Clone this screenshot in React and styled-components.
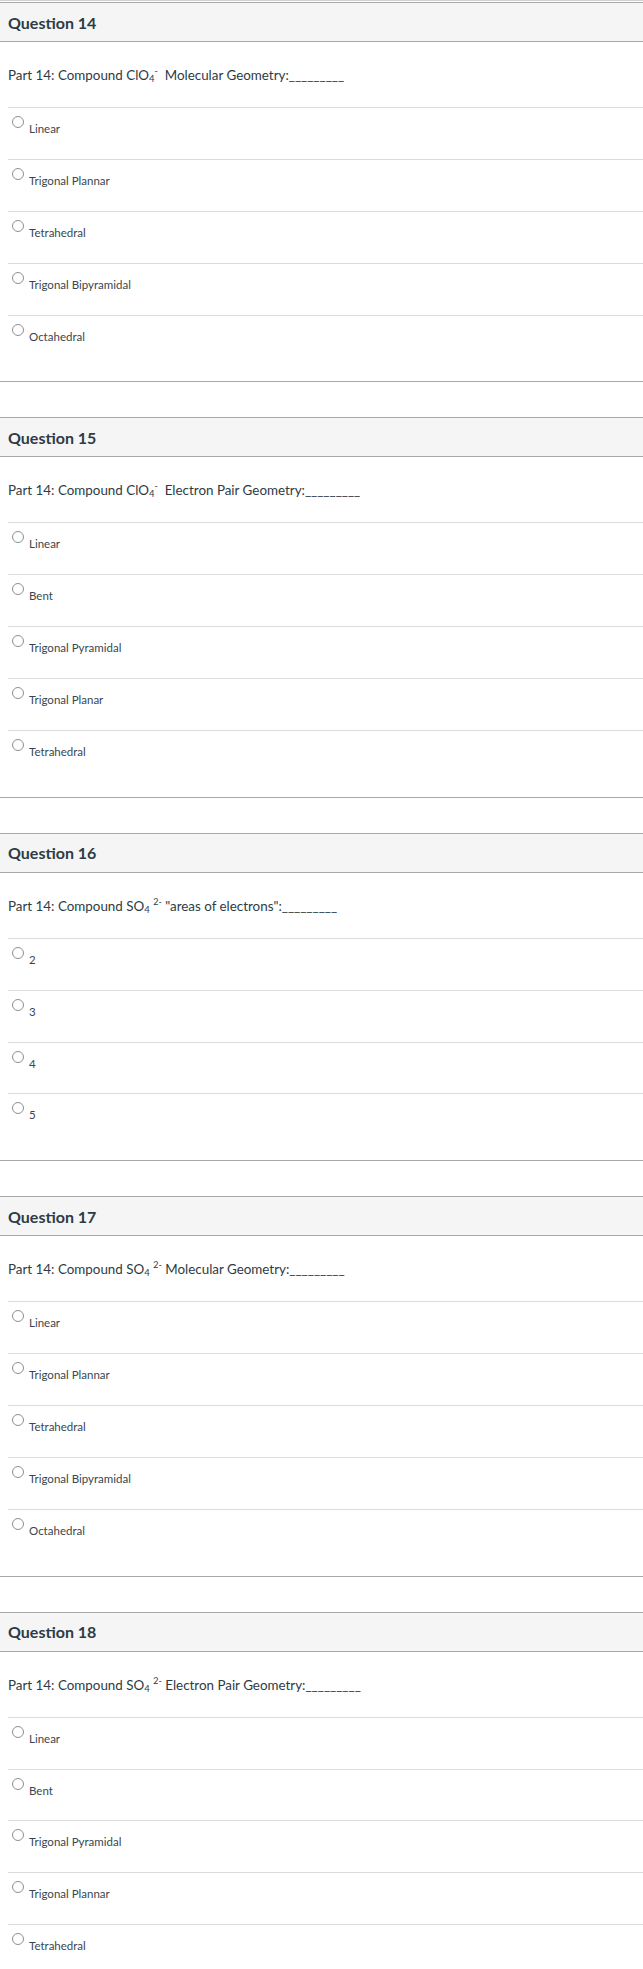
import React from 'react'
import styled, { createGlobalStyle } from 'styled-components'

const GlobalStyle = createGlobalStyle`
  body {
    margin: 0;
    background: #ffffff;
    font-family: Lato, "Liberation Sans", sans-serif;
    color: #2d3b45;
  }
`

const Page = styled.div`
  width: 643px;
`

const TopRule = styled.div`
  border-top: 1px solid #d0d0d0;
  margin-bottom: 1px;
`

const Block = styled.div`
  border-top: 1px solid #a9a9a9;
  border-bottom: 1px solid #a9a9a9;
  margin-bottom: 35px;
`

const Header = styled.div`
  height: 38px;
  background-color: #f5f5f5;
  border-bottom: 1px solid #a9a9a9;
  display: flex;
  align-items: center;
  padding-left: 8px;
  font-size: 16px;
  font-weight: 700;
  color: #2d3b45;
`

const Body = styled.div`
  padding: 23px 0 15px 8px;
`

const Prompt = styled.div`
  font-size: 13.4px;
  line-height: 20px;
  margin-bottom: 22px;
  color: #2d3b45;
  white-space: pre;
`

const Sub = styled.sub`
  font-size: 9.5px;
  line-height: 0;
  vertical-align: -2px;
`

const Sup = styled.sup`
  font-size: 9px;
  line-height: 0;
  vertical-align: 6px;
`

const Option = styled.div`
  border-top: 1px solid #dcdcdc;
  display: flex;
  align-items: flex-start;
  padding: 8px 0 0 4px;
  height: 42.875px;
`

const Radio = styled.span`
  width: 10px;
  height: 10px;
  border: 1px solid #8f8f8f;
  border-radius: 50%;
  background: #fff;
  flex-shrink: 0;
`

const Label = styled.span`
  margin: 6px 0 0 5px;
  font-size: 11.5px;
  line-height: 14px;
  color: #3a464f;
`

const questions = [
  {
    n: 14,
    prompt: (
      <>Part 14: Compound ClO<Sub>4</Sub><Sup>-</Sup>  Molecular Geometry:_________</>
    ),
    options: ['Linear', 'Trigonal Plannar', 'Tetrahedral', 'Trigonal Bipyramidal', 'Octahedral'],
  },
  {
    n: 15,
    prompt: (
      <>Part 14: Compound ClO<Sub>4</Sub><Sup>-</Sup>  Electron Pair Geometry:_________</>
    ),
    options: ['Linear', 'Bent', 'Trigonal Pyramidal', 'Trigonal Planar', 'Tetrahedral'],
  },
  {
    n: 16,
    prompt: (
      <>Part 14: Compound SO<Sub>4</Sub> <Sup>2-</Sup> "areas of electrons":_________</>
    ),
    options: ['2', '3', '4', '5'],
  },
  {
    n: 17,
    prompt: (
      <>Part 14: Compound SO<Sub>4</Sub> <Sup>2-</Sup> Molecular Geometry:_________</>
    ),
    options: ['Linear', 'Trigonal Plannar', 'Tetrahedral', 'Trigonal Bipyramidal', 'Octahedral'],
  },
  {
    n: 18,
    prompt: (
      <>Part 14: Compound SO<Sub>4</Sub> <Sup>2-</Sup> Electron Pair Geometry:_________</>
    ),
    options: ['Linear', 'Bent', 'Trigonal Pyramidal', 'Trigonal Plannar', 'Tetrahedral'],
  },
]

const App = () => {
  return (
    <Page>
      <GlobalStyle />
      <TopRule />
      {questions.map(q => (
        <Block key={q.n}>
          <Header>Question {q.n}</Header>
          <Body>
            <Prompt>{q.prompt}</Prompt>
            {q.options.map(opt => (
              <Option key={opt}>
                <Radio />
                <Label>{opt}</Label>
              </Option>
            ))}
          </Body>
        </Block>
      ))}
    </Page>
  )
}

export default App
